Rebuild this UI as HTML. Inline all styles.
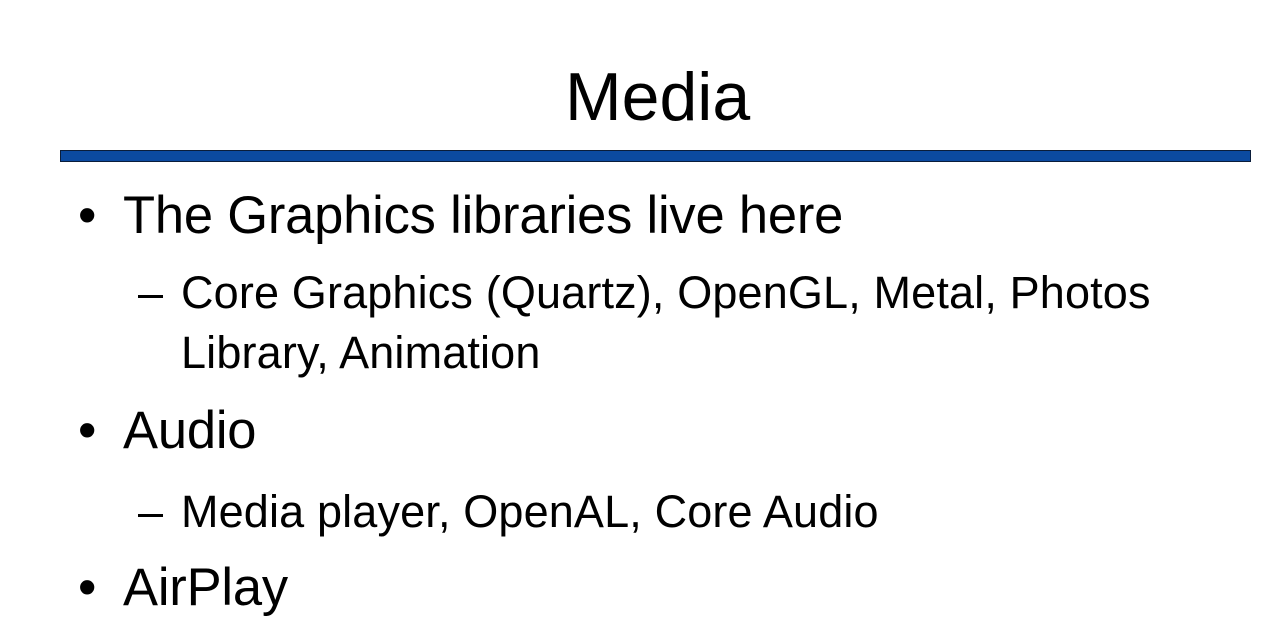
<!DOCTYPE html>
<html><head><style>
html,body{margin:0;padding:0;background:#fff;width:1288px;height:636px;overflow:hidden}
body{position:relative;font-family:"Liberation Sans",sans-serif;color:#000}
.t{position:absolute;white-space:nowrap;line-height:1}
.b{font-size:52.5px;letter-spacing:-0.2px}
.s{font-size:45px;letter-spacing:0.15px}
</style></head><body>
<div class="t" style="left:565px;top:63px;font-size:68px">Media</div>
<div style="position:absolute;left:60px;top:150px;width:1189px;height:10px;background:#0b4aa0;border:1px solid #0a1d3a"></div>
<div class="t b" style="left:78px;top:190px">•</div>
<div class="t b" style="left:123px;top:190px">The Graphics libraries live here</div>
<div class="t s" style="left:138px;top:270px">–</div>
<div class="t s" style="left:181px;top:270px">Core Graphics (Quartz), OpenGL, Metal, Photos</div>
<div class="t s" style="left:181px;top:330px">Library, Animation</div>
<div class="t b" style="left:78px;top:405px">•</div>
<div class="t b" style="left:123px;top:405px">Audio</div>
<div class="t s" style="left:138px;top:489px">–</div>
<div class="t s" style="left:181px;top:489px">Media player, OpenAL, Core Audio</div>
<div class="t b" style="left:78px;top:562px">•</div>
<div class="t b" style="left:123px;top:562px">AirPlay</div>
</body></html>
